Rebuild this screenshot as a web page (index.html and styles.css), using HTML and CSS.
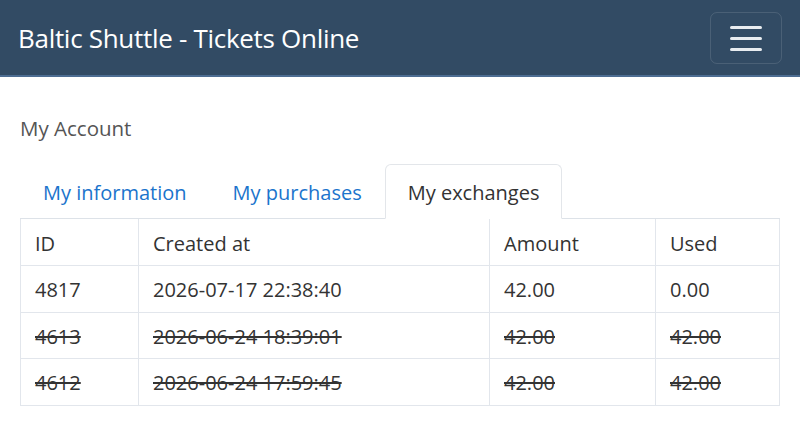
FILE: index.html
```html
<!DOCTYPE html>
<html>
<head>
<meta charset="utf-8">
<link rel="stylesheet" href="styles.css">
</head>
<body>
<nav class="navbar">
  <span class="brand">Baltic Shuttle - Tickets Online</span>
  <button class="toggler" type="button"><span class="bar"></span><span class="bar"></span><span class="bar"></span></button>
</nav>
<main class="content">
  <p class="title">My Account</p>
  <ul class="tabs">
    <li class="tab"><a class="tab-link">My information</a></li>
    <li class="tab"><a class="tab-link">My purchases</a></li>
    <li class="tab active"><a class="tab-link">My exchanges</a></li>
  </ul>
  <table class="grid">
    <colgroup><col class="c1"><col class="c2"><col class="c3"><col class="c4"></colgroup>
    <thead>
      <tr><th>ID</th><th>Created at</th><th>Amount</th><th>Used</th></tr>
    </thead>
    <tbody>
      <tr><td>4817</td><td>2026-07-17 22:38:40</td><td>42.00</td><td>0.00</td></tr>
      <tr class="void"><td>4613</td><td>2026-06-24 18:39:01</td><td>42.00</td><td>42.00</td></tr>
      <tr class="void"><td>4612</td><td>2026-06-24 17:59:45</td><td>42.00</td><td>42.00</td></tr>
    </tbody>
  </table>
</main>
</body>
</html>
```
FILE: styles.css
```css
* { box-sizing: border-box; }
body {
  margin: 0;
  font-family: "Open Sans", "Noto Sans", sans-serif;
  font-size: 20px;
  color: #333;
  background: #fff;
}
.navbar {
  height: 77px;
  background: #324b64;
  border-bottom: 2px solid #4d6d92;
  display: flex;
  align-items: center;
  justify-content: space-between;
  padding: 0 18px 0 18px;
}
.brand {
  color: #fff;
  font-size: 26px;
  letter-spacing: -0.3px;
}
.toggler {
  width: 72px;
  height: 52px;
  background: transparent;
  border: 1px solid rgba(255,255,255,0.12);
  border-radius: 7px;
  display: flex;
  flex-direction: column;
  align-items: center;
  justify-content: center;
  gap: 8px;
  padding: 0;
  margin-top: 1px;
}
.bar {
  display: block;
  width: 32px;
  height: 3px;
  border-radius: 2px;
  background: #e8ecf0;
}
.content {
  padding: 0 20px;
}
.title {
  margin: 37px 0 0 0;
  line-height: 28px;
  color: #555;
  font-size: 20.5px;
}
.tabs {
  list-style: none;
  margin: 22px 0 0 0;
  padding: 0;
  display: flex;
  border-bottom: 1px solid #dde2e8;
}
.tab {
  margin-bottom: -1px;
}
.tab-link {
  display: block;
  padding: 1px 22px 0;
  height: 55px;
  line-height: 54px;
  color: #1b74cc;
  border: 1px solid transparent;
  border-radius: 6px 6px 0 0;
}
.tab.active .tab-link {
  color: #333;
  background: #fff;
  border-color: #e3e6ea #e3e6ea #fff;
}
.grid {
  width: 100%;
  border-collapse: collapse;
  table-layout: fixed;
}
.c1 { width: 118px; }
.c2 { width: 351px; }
.c3 { width: 166px; }
.c4 { width: auto; }
.grid th, .grid td {
  border: 1px solid #e2e6ec;
  text-align: left;
  font-weight: normal;
  padding: 2px 14px 0;
  height: 46.5px;
  white-space: nowrap;
}
.grid thead th { border-top: none; }
.grid tr.void td { text-decoration: line-through; }
```
